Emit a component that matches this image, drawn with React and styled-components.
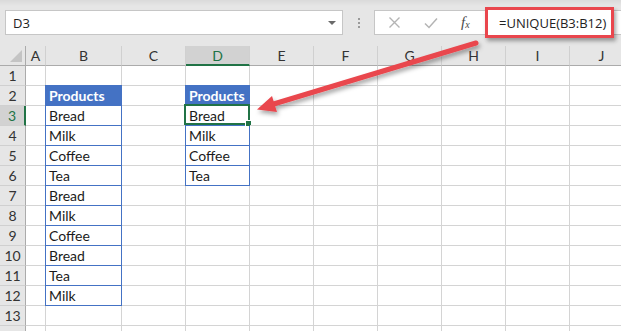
import React from 'react';
import styled, { createGlobalStyle } from 'styled-components';

const GlobalStyle = createGlobalStyle`
  html, body {
    margin: 0;
    padding: 0;
    background: #ffffff;
    overflow: hidden;
  }
`;

const GREEN = '#217346';
const BLUE = '#4472c4';
const RED = '#e9464d';

const columns = ['A', 'B', 'C', 'D', 'E', 'F', 'G', 'H', 'I', 'J'];
const widths = [20, 76, 64, 64, 64, 64, 64, 64, 64, 64];
const rowCount = 14;
const lastLabelled = 13; // row 14 only peeks in at the bottom edge

const sourceList = ['Bread', 'Milk', 'Coffee', 'Tea', 'Bread', 'Milk', 'Coffee', 'Bread', 'Tea', 'Milk'];
const uniqueList = ['Bread', 'Milk', 'Coffee', 'Tea'];

// what sits in each cell: { text, kind: 'head' | 'body' }
const cellAt = (col, row) => {
  if (col === 'B' || col === 'D') {
    const list = col === 'B' ? sourceList : uniqueList;
    if (row === 2) return { text: 'Products', kind: 'head' };
    if (row >= 3 && row < 3 + list.length) return { text: list[row - 3], kind: 'body' };
  }
  return null;
};

const Window = styled.div`
  position: relative;
  width: 621px;
  height: 331px;
  overflow: hidden;
  background: #ffffff;
`;

const Toolbar = styled.div`
  display: flex;
  align-items: flex-start;
  height: 46px;
  box-sizing: border-box;
  padding: 10px 0 0 5px;
  background: linear-gradient(#dadada 0px, #e6e6e6 6px, #e6e6e6 100%);
  font-family: 'Open Sans', 'Noto Sans', sans-serif;
  font-size: 13px;
  color: #222;
`;

const NameBox = styled.div`
  display: flex;
  align-items: center;
  justify-content: space-between;
  width: 338px;
  height: 25px;
  box-sizing: border-box;
  padding: 0 6px 0 7px;
  background: #fff;
  border: 1px solid #c6c6c6;
`;

const Caret = styled.span`
  width: 0;
  height: 0;
  border-left: 4px solid transparent;
  border-right: 4px solid transparent;
  border-top: 4px solid #6a6a6a;
`;

const Grip = styled.div`
  display: flex;
  flex-direction: column;
  align-items: center;
  justify-content: center;
  gap: 2px;
  width: 31px;
  height: 25px;
  span {
    width: 2px;
    height: 2px;
    background: #9a9a9a;
  }
`;

const FormulaBox = styled.div`
  position: relative;
  flex: 1;
  display: flex;
  align-items: center;
  height: 25px;
  box-sizing: border-box;
  padding-left: 12px;
  background: #fff;
  border: 1px solid #c6c6c6;
  border-right: none;
`;

const IconButton = styled.span`
  display: flex;
  align-items: center;
  justify-content: center;
  width: 14px;
  margin-right: ${(p) => p.$gap}px;
`;

const Fx = styled.span`
  font-family: 'Liberation Serif', serif;
  font-style: italic;
  font-size: 15px;
  color: #4a4a4a;
  sub {
    font-size: 10px;
    vertical-align: -1px;
  }
`;

const Highlight = styled.div`
  position: absolute;
  left: 110px;
  top: -4px;
  width: 129px;
  height: 31px;
  box-sizing: border-box;
  display: flex;
  align-items: center;
  padding-left: 11px;
  background: #fff;
  border: 3px solid ${RED};
  box-shadow: 2px 3px 4px rgba(0, 0, 0, 0.35);
  white-space: nowrap;
`;

const Sheet = styled.div`
  display: grid;
  grid-template-columns: 26px ${widths.map((w) => `${w}px`).join(' ')};
  grid-auto-rows: 20px;
  font-family: Lato, 'Liberation Sans', sans-serif;
  font-size: 14px;
  color: #1a1a1a;
`;

const Corner = styled.div`
  position: relative;
  background: #e6e6e6;
  box-sizing: border-box;
  border-right: 1px solid #ababab;
  border-bottom: 1px solid #ababab;
  &::after {
    content: '';
    position: absolute;
    right: 3px;
    bottom: 3px;
    border-left: 12px solid transparent;
    border-bottom: 12px solid #c4c4c4;
  }
`;

const ColHead = styled.div`
  display: flex;
  align-items: center;
  justify-content: center;
  box-sizing: border-box;
  background: ${(p) => (p.$active ? '#d2d2d2' : '#e6e6e6')};
  color: ${(p) => (p.$active ? GREEN : '#333')};
  border-right: 1px solid #d0d0d0;
  border-bottom: ${(p) => (p.$active ? `2px solid ${GREEN}` : '1px solid #ababab')};
`;

const RowHead = styled.div`
  display: flex;
  align-items: center;
  justify-content: center;
  box-sizing: border-box;
  background: ${(p) => (p.$active ? '#d2d2d2' : '#e6e6e6')};
  color: ${(p) => (p.$active ? GREEN : '#333')};
  border-bottom: 1px solid #d0d0d0;
  border-right: ${(p) => (p.$active ? `2px solid ${GREEN}` : '1px solid #ababab')};
`;

const Cell = styled.div`
  position: relative;
  display: flex;
  align-items: flex-end;
  box-sizing: border-box;
  padding: 0 3px 1px;
  line-height: 16px;
  white-space: nowrap;
  border-right: 1px solid #d4d4d4;
  border-bottom: 1px solid #d4d4d4;

  ${(p) =>
    p.$kind === 'head' &&
    `
    background: ${BLUE};
    color: #fff;
    font-weight: 700;
    border-color: ${BLUE};
    box-shadow: -1px -1px 0 0 ${BLUE}, 0 -1px 0 0 ${BLUE}, -1px 0 0 0 ${BLUE};
  `}

  ${(p) =>
    p.$kind === 'body' &&
    `
    border-color: ${BLUE};
    box-shadow: -1px 0 0 0 ${BLUE};
  `}
`;

const Selection = styled.div`
  position: absolute;
  left: -2px;
  top: -2px;
  right: -1px;
  bottom: 0;
  border: 2px solid ${GREEN};
  pointer-events: none;
  &::after {
    content: '';
    position: absolute;
    right: -4px;
    bottom: -4px;
    width: 5px;
    height: 5px;
    background: ${GREEN};
    border: 1px solid #fff;
  }
`;

const Overlay = styled.svg`
  position: absolute;
  left: 0;
  top: 0;
  pointer-events: none;
`;

const CrossIcon = () => (
  <svg width="13" height="13" viewBox="0 0 13 13">
    <path d="M1.5 1.5 L11.5 11.5 M11.5 1.5 L1.5 11.5" stroke="#b4b4b4" strokeWidth="1.4" fill="none" />
  </svg>
);

const CheckIcon = () => (
  <svg width="14" height="12" viewBox="0 0 14 12">
    <path d="M1 6.5 L5 10.5 L13 1.5" stroke="#b4b4b4" strokeWidth="1.5" fill="none" />
  </svg>
);

const Arrow = () => (
  <Overlay width="621" height="331" viewBox="0 0 621 331">
    <defs>
      <filter id="arrowShadow" x="-10%" y="-30%" width="130%" height="180%">
        <feDropShadow dx="1.5" dy="3" stdDeviation="2" floodColor="#000" floodOpacity="0.35" />
      </filter>
    </defs>
    <g filter="url(#arrowShadow)" fill={RED} stroke={RED}>
      <line x1="476" y1="43" x2="272" y2="104.5" strokeWidth="5" strokeLinecap="round" />
      <polygon points="257,109.5 272,96 277,112" stroke="none" />
    </g>
  </Overlay>
);

const App = () => {
  const rows = Array.from({ length: rowCount }, (_, i) => i + 1);
  return (
    <>
      <GlobalStyle />
      <Window>
        <Toolbar>
          <NameBox>
            D3
            <Caret />
          </NameBox>
          <Grip>
            <span />
            <span />
            <span />
          </Grip>
          <FormulaBox>
            <IconButton $gap={23}>
              <CrossIcon />
            </IconButton>
            <IconButton $gap={23}>
              <CheckIcon />
            </IconButton>
            <Fx>
              f<sub>x</sub>
            </Fx>
            <Highlight>=UNIQUE(B3:B12)</Highlight>
          </FormulaBox>
        </Toolbar>

        <Sheet>
          <Corner />
          {columns.map((c) => (
            <ColHead key={c} $active={c === 'D'}>
              {c}
            </ColHead>
          ))}
          {rows.map((r) => (
            <React.Fragment key={r}>
              <RowHead $active={r === 3}>{r <= lastLabelled ? r : null}</RowHead>
              {columns.map((c) => {
                const cell = cellAt(c, r);
                return (
                  <Cell key={c + r} $kind={cell?.kind}>
                    {cell?.text}
                    {c === 'D' && r === 3 && <Selection />}
                  </Cell>
                );
              })}
            </React.Fragment>
          ))}
        </Sheet>

        <Arrow />
      </Window>
    </>
  );
};

export default App;
